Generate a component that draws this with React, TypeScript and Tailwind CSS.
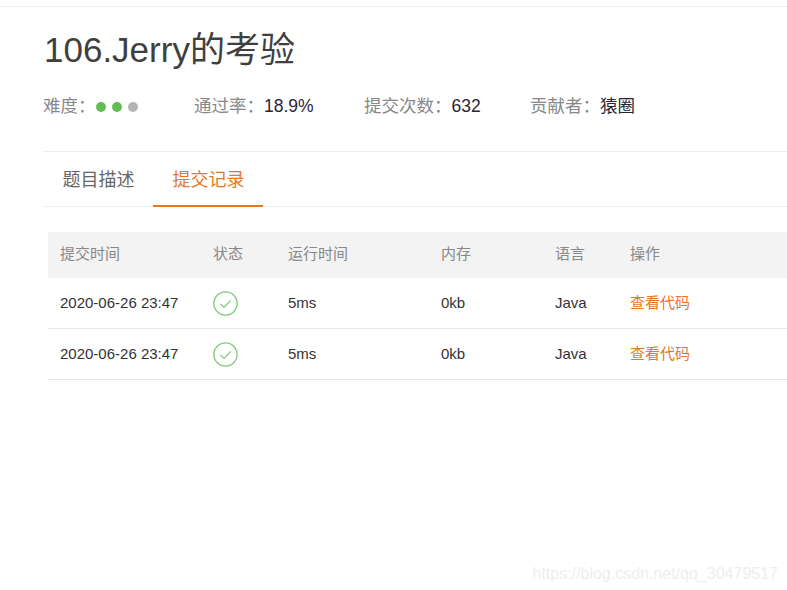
const font = "font-['Liberation_Sans','Noto_Sans_CJK_SC',sans-serif]";

function Check() {
  return (
    <svg width="25" height="25" viewBox="0 0 25 25" fill="none" className="block">
      <circle cx="12.5" cy="12.5" r="11.6" stroke="#7fc77a" strokeWidth="1.3" />
      <path d="M7.3 12.8 L11 16.5 L17.8 9.4" stroke="#7fc77a" strokeWidth="1.2" />
    </svg>
  );
}

function Stat({ label, value, className }: { label: string; value: string; className: string }) {
  return (
    <div className={`flex items-center ${className}`}>
      <span className="text-[#888888]">{label}：</span>
      <span className="text-[#2c2433]">{value}</span>
    </div>
  );
}

const rowGrid = "grid grid-cols-[153px_75px_153px_114px_75px_1fr] items-center pl-3";

function Row() {
  return (
    <div className={`${rowGrid} h-[51px] border-b border-[#e9e9e9] text-[15px] text-[#333333]`}>
      <span>2020-06-26 23:47</span>
      <Check />
      <span>5ms</span>
      <span>0kb</span>
      <span>Java</span>
      <span className="text-[#e8771f]">查看代码</span>
    </div>
  );
}

export default function App() {
  return (
    <div className={`relative w-[787px] h-[590px] overflow-hidden bg-white ${font}`}>
      <div className="h-[7px] border-b border-[#ececec]" />
      <div className="pl-[43px]">
        <h1 className="pt-[20px] pl-[1px] h-[73px] text-[35px] leading-[46px] text-[#3f3f3f] font-normal">106.Jerry的考验</h1>
        <div className="flex items-center h-[52px] pt-[1px] text-[17.5px]">
          <div className="flex items-center w-[151px]">
            <span className="text-[#888888]">难度：</span>
            <span className="flex gap-[6px] ml-[0.5px]">
              <i className="block w-[10px] h-[10px] rounded-full bg-[#62bd54]" />
              <i className="block w-[10px] h-[10px] rounded-full bg-[#62bd54]" />
              <i className="block w-[10px] h-[10px] rounded-full bg-[#b4b4b4]" />
            </span>
          </div>
          <Stat label="通过率" value="18.9%" className="w-[170px]" />
          <Stat label="提交次数" value="632" className="w-[166px]" />
          <Stat label="贡献者" value="猿圈" className="" />
        </div>
        <div className="mt-[19px] border-y border-[#ececec] h-[56px] flex text-lg">
          <div className="w-[110px] flex items-center justify-center text-[#666666] pt-[1px] pl-[1px]">题目描述</div>
          <div className="w-[110px] flex items-center justify-center text-[#e8771f] border-b-2 border-[#e8771f] h-[55px] pt-[2px] pl-[1px]">提交记录</div>
        </div>
        <div className="mt-[25px] ml-[5px]">
          <div className={`${rowGrid} h-[46px] pb-[1px] bg-[#f3f3f3] text-[15px] text-[#888888]`}>
            <span>提交时间</span>
            <span>状态</span>
            <span>运行时间</span>
            <span>内存</span>
            <span>语言</span>
            <span>操作</span>
          </div>
          <Row />
          <Row />
        </div>
      </div>
      <div className="absolute right-[9px] top-[562px] text-base text-[#eeeeee]">https://blog.csdn.net/qq_30479517</div>
    </div>
  );
}
